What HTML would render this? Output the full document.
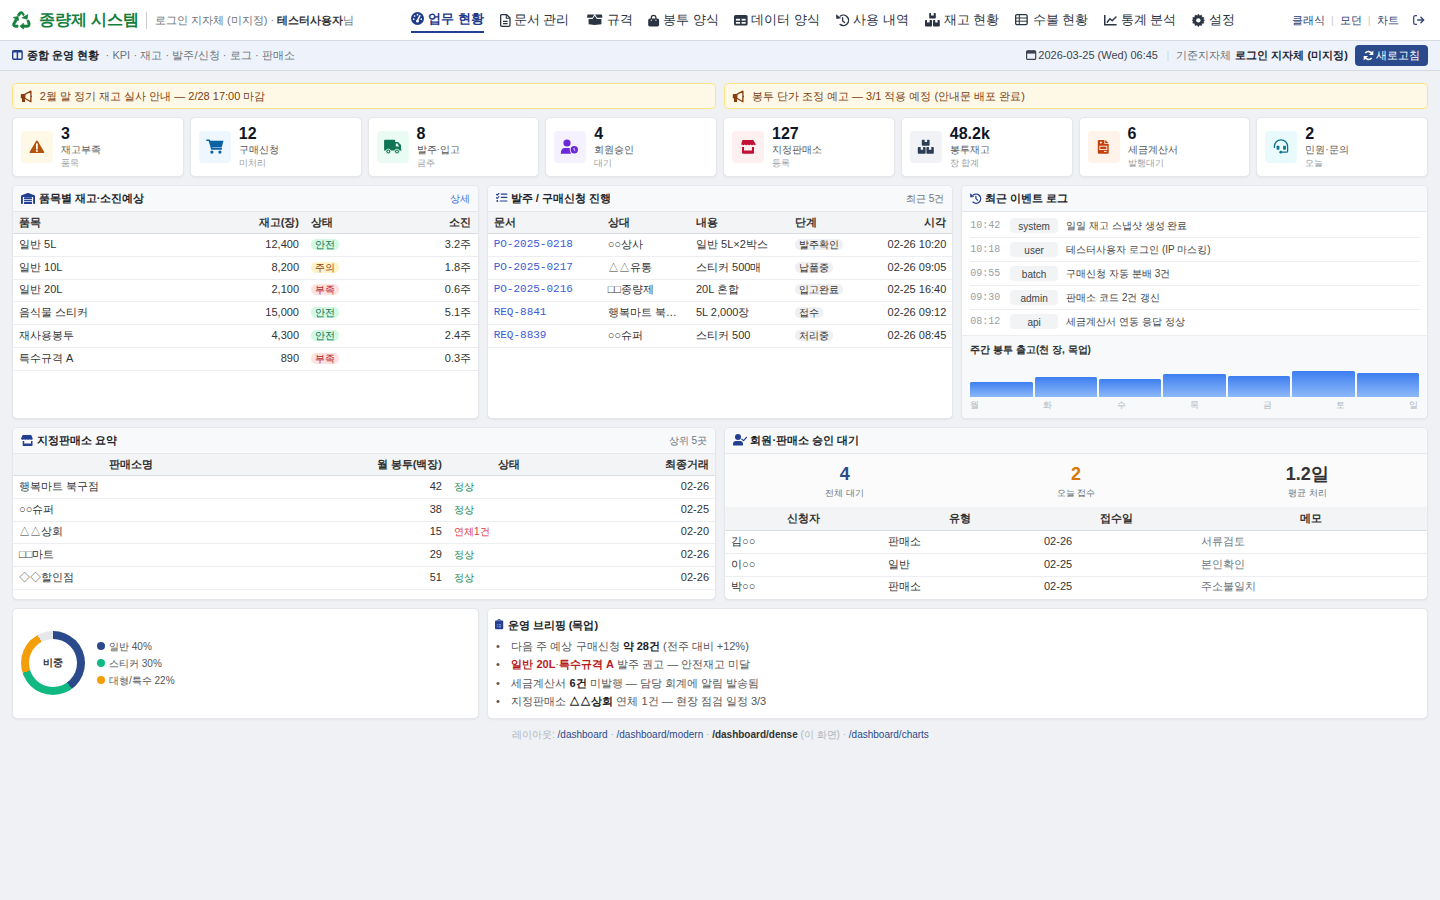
<!DOCTYPE html>
<html lang="ko"><head><meta charset="utf-8"><title>종량제 시스템</title>
<style>
*{box-sizing:border-box;margin:0;padding:0}
html,body{width:1440px;height:900px;overflow:hidden}
body{font-family:"Liberation Sans",sans-serif;background:#eff1f5;color:#212529;font-size:11px;position:relative}
.abs{position:absolute}
svg{display:inline-block;vertical-align:middle}
/* top nav */
.top{position:absolute;left:0;top:0;width:1440px;height:41px;background:#fff;border-bottom:1px solid #d5d9e0}
.brand{position:absolute;left:12px;top:9px;width:130px;height:22px;font-size:16px;font-weight:bold;color:#15803d;white-space:nowrap;line-height:22px}
.brand svg{vertical-align:-3px;margin-right:5px}
.who{position:absolute;left:146px;top:12px;height:17px;border-left:1px solid #ccc;padding-left:8px;font-size:11px;color:#6c757d;line-height:17px;white-space:nowrap}
.who b{color:#333}
.nav{position:absolute;top:0;height:40px;font-size:13px;color:#2b3442;white-space:nowrap;line-height:40px}
.nav.act{color:#1e3a8a;font-weight:bold}

.nav svg{vertical-align:-2px;margin-right:4px}
.tlinks{position:absolute;left:1292px;top:12px;font-size:11px;color:#2c3e70;white-space:nowrap;line-height:16px}
.tlinks .sep{color:#ccc;margin:0 6px}
/* sub header */
.sub{position:absolute;left:0;top:41px;width:1440px;height:30px;background:#eef3fb;border-bottom:1px solid #d5d9e0}
.sub .l{position:absolute;left:12px;top:7px;font-size:11px;line-height:15px;white-space:nowrap}
.sub .l b{color:#212529}
.sub .l span{color:#6c757d}
.sub .r{position:absolute;right:85px;top:7px;font-size:11px;line-height:15px;white-space:nowrap;color:#444}
.btn{position:absolute;left:1355px;top:45px;width:73px;height:21px;background:#2a4a8c;border-radius:4px;color:#fff;font-size:11px;line-height:21px}
/* alerts */
.alert{position:absolute;top:83px;height:26px;background:#fef9e7;border:1px solid #fde28a;border-radius:4px;color:#7c3f12;font-size:11px;line-height:24px;padding-left:7px;white-space:nowrap}

/* kpi */
.kpi{position:absolute;top:117px;width:171.75px;height:60px;background:#fff;border-radius:5px;border:1px solid #e4e7eb;box-shadow:0 1px 2px rgba(0,0,0,.05)}
.kpi .ic{position:absolute;left:8px;top:13px;width:32px;height:32px;border-radius:4px}
.kpi .ic svg{position:absolute;left:0;top:0}
.kpi .v{position:absolute;left:48px;top:7px;font-size:16px;font-weight:bold;color:#0f1626;line-height:18px}
.kpi .t1{position:absolute;left:48px;top:25px;font-size:10px;color:#555;line-height:13px}
.kpi .t2{position:absolute;left:48px;top:39px;font-size:9px;color:#9aa0a6;line-height:12px}
/* panels */
.pnl{position:absolute;background:#fff;border-radius:5px;border:1px solid #e4e7eb;box-shadow:0 1px 2px rgba(0,0,0,.05);overflow:hidden}
.ph{height:26px;background:#f8f9fb;border-bottom:1px solid #e4e7eb;position:relative;font-size:11px;font-weight:bold;line-height:25px;padding-left:8px;color:#212529;white-space:nowrap}
.ph .rt{position:absolute;right:8px;top:0;font-weight:normal;font-size:10px;color:#6c757d}
.ph svg{vertical-align:-2px;margin-right:4px}
table{border-collapse:separate;border-spacing:0;width:100%;font-size:11px;table-layout:fixed}
th{background:#f3f4f6;font-weight:bold;color:#333;line-height:15px;padding:3px 6px 3px;text-align:left;border-bottom:1px solid #d9dce1;white-space:nowrap}
td{line-height:15px;padding:2.7px 6px 4.13px;border-bottom:1px solid #eceef1;color:#333;white-space:nowrap;overflow:hidden}
.num{text-align:right}
.bdg{display:inline-block;font-size:10px;line-height:11px;padding:0 4px;border-radius:5px;vertical-align:0px}
.g{background:#d1fae5;color:#0f6b4f}
.y{background:#fef3c7;color:#92400e}
.rd{background:#fee2e2;color:#b91c1c}
.gr{background:#eef0f3;color:#333}
.mono{font-family:"Liberation Mono",monospace;color:#3b5bdb}

.log{position:relative;height:24px;margin:0 7px 0 8px;border-bottom:1px solid #eceef1;white-space:nowrap}
.log .tm{position:absolute;left:0;top:6px;font-family:"Liberation Mono",monospace;font-size:10px;color:#9aa0a6;line-height:12px}
.log .tg{position:absolute;left:40px;top:4.3px;width:47.5px;height:14.5px;background:#f1f3f5;border-radius:4px;text-align:center;font-size:10px;line-height:17px;color:#444}
.log .tx{position:absolute;left:96px;top:5px;font-size:10px;line-height:14px;color:#444}
.chart{position:absolute;left:0;top:149px;width:100%;bottom:0;background:#f8f9fb;border-top:1px solid #eceef1}
.bars{position:absolute;left:8px;right:8px;top:35px;height:26px;display:flex;align-items:flex-end;gap:2px}
.bars div{flex:1;background:linear-gradient(#3d7ef0,#8db9f8);border-radius:1.5px 1.5px 0 0}
.lbl{position:absolute;left:8px;right:9px;top:213px;display:flex;justify-content:space-between;font-size:9px;color:#adb5bd;line-height:10px}
.stat{position:absolute;top:0;width:231.33px;text-align:center}
.stat .n{font-size:18px;font-weight:bold;line-height:22px}
.stat .l{font-size:9.3px;color:#6c757d;line-height:12px;margin-top:2px}
.bul{display:inline-block;width:17.3px;color:#555;padding-left:2px}
.t1 td:last-child,.t1 th:last-child{padding-right:6.6px}
</style></head><body>

<!-- TOP NAV -->
<div class="top">
  <div class="brand"><svg class="abs" style="left:-0.5px;top:1.7px" width="19" height="19" viewBox="0 0 19 19"><g fill="#15803d" stroke="#15803d" stroke-width="0.7" stroke-linejoin="round"><path d="M5.3 4.2 Q7 0.3 9.6 0.6 Q11 0.8 12.4 3.6 L11.4 4.9 L10.2 3.2 Q9.6 2.4 8.7 3.1 L7.2 5.3z"/><path d="M10 6.8 L15.8 3.6 L15 8.2z"/><path d="M1.2 6.5 L6 5.5 L6.6 9.4z"/><path d="M3.3 8 L5.4 9.2 L3 13 Q2.6 14 3.6 14.1 L6 14.1 L6 16.3 L3.2 16.3 Q0.2 16.1 0.6 12.8z"/><path d="M14.9 9.5 Q16.5 8.6 17 9.3 Q19.1 12.8 17.6 15.3 Q16.8 16.3 15.6 16.3 L11.5 16.3 L11.5 14.1 L15.4 14.1 Q16.2 14 16 13.2z"/><path d="M7.9 15.2 L11.6 12.2 L11.6 18.1z"/></g></svg><span style="position:absolute;left:26.5px;top:0">종량제 시스템</span></div>
  <div class="who">로그인 지자체 (미지정) · <b>테스터사용자</b>님</div>
</div>

<!-- SUB HEADER -->
<div class="sub">
  <svg class="abs" style="left:12.1px;top:9px" width="11" height="10" viewBox="0 0 11 10"><rect x="0.7" y="0.7" width="9.4" height="8.6" rx="1.2" stroke="#233f91" stroke-width="1.4" fill="none"/><rect x="0.7" y="0.7" width="9.4" height="1.8" fill="#233f91"/><path d="M5.4 1 V9" stroke="#233f91" stroke-width="1.5"/></svg>
  <div class="abs" style="left:27.3px;top:7px;font-size:11px;line-height:15px;white-space:nowrap;font-weight:bold;color:#212529">종합 운영 현황</div>
  <div class="abs" style="left:105.5px;top:7px;font-size:11px;line-height:15px;white-space:nowrap;color:#6c757d;word-spacing:0.2px">· KPI · 재고 · 발주/신청 · 로그 · 판매소</div>
</div>
<div class="btn"><svg width="11" height="11" viewBox="0 0 11 11" style="position:absolute;left:8px;top:5px"><path d="M9.2 4.3 A4 4 0 0 0 2.3 3" stroke="#fff" stroke-width="1.6" fill="none"/><path d="M10.3 0.6 V5 H5.9z" fill="#fff"/><path d="M1.8 6.7 A4 4 0 0 0 8.7 8" stroke="#fff" stroke-width="1.6" fill="none"/><path d="M0.7 10.4 V6 H5.1z" fill="#fff"/></svg><span style="position:absolute;left:21px;top:0">새로고침</span></div>


<!-- NAV ITEMS -->
<svg class="abs" style="left:411px;top:12.3px" width="13" height="13" viewBox="0 0 13 13"><circle cx="6.5" cy="6.5" r="6.5" fill="#1e3a8a"/><path d="M6.5 8.4 L8.9 3.6" stroke="#fff" stroke-width="1.4" stroke-linecap="round"/><circle cx="6.5" cy="8.9" r="1.5" fill="#fff"/><circle cx="2.7" cy="7.2" r="0.85" fill="#fff"/><circle cx="3.6" cy="4" r="0.85" fill="#fff"/><circle cx="6.5" cy="2.7" r="0.85" fill="#fff"/><circle cx="10.3" cy="7.2" r="0.85" fill="#fff"/></svg>
<div class="nav act" style="left:428.3px;top:-0.7px">업무 현황</div><div class="abs" style="left:411px;top:31px;width:73px;height:2px;background:#233f91"></div>
<svg class="abs" style="left:499.7px;top:14.1px" width="11" height="13" viewBox="0 0 11 13"><path d="M1.7 0.65 H6.6 L10 4 V11.1 Q10 12.3 8.8 12.3 H1.9 Q0.65 12.3 0.65 11.1 V1.9 Q0.65 0.65 1.7 0.65z" stroke="#2b3442" stroke-width="1.3" fill="none" stroke-linejoin="round"/><path d="M6.3 0.9 V4.3 H9.8" stroke="#2b3442" stroke-width="1.1" fill="none"/><path d="M3 7.4 H7.6 M3 9.6 H7.6" stroke="#2b3442" stroke-width="1.1"/></svg>
<div class="nav" style="left:513.7px">문서 관리</div>
<svg class="abs" style="left:586.6px;top:14.4px" width="16" height="11" viewBox="0 0 16 11"><path d="M0.5 0.4 H7.3 L5.4 3.8 H0z" fill="#2b3442"/><path d="M8.1 0.4 H14.9 L15.4 3.8 H10z" fill="#2b3442"/><path d="M1.6 5 H5.6 L7.7 1.8 L9.8 5 H14.4 V10.2 L7.7 11 L1.6 10.2z" fill="#2b3442"/></svg>
<div class="nav" style="left:607.2px">규격</div>
<svg class="abs" style="left:647.9px;top:14.1px" width="12" height="13" viewBox="0 0 12 13"><path d="M3.3 5 V3.6 A2.3 2.3 0 0 1 7.9 3.6 V5" stroke="#2b3442" stroke-width="1.3" fill="none"/><rect x="0.2" y="4.4" width="10.9" height="8" rx="1.6" fill="#2b3442"/><circle cx="3.3" cy="6.2" r="0.6" fill="#fff"/><circle cx="7.9" cy="6.2" r="0.6" fill="#fff"/></svg>
<div class="nav" style="left:663.3px">봉투 양식</div>
<svg class="abs" style="left:733.9px;top:14.9px" width="14" height="11" viewBox="0 0 14 11"><rect x="0" y="0" width="13.6" height="10.6" rx="1.6" fill="#2b3442"/><rect x="1.9" y="3.8" width="4.2" height="1.8" fill="#fff"/><rect x="7.6" y="3.8" width="4.1" height="1.8" fill="#fff"/><rect x="1.9" y="7" width="4.2" height="1.7" fill="#fff"/><rect x="7.6" y="7" width="4.1" height="1.7" fill="#fff"/></svg>
<div class="nav" style="left:750.9px">데이터 양식</div>
<svg class="abs" style="left:835.8px;top:13.6px" width="14" height="13" viewBox="0 0 14 13"><path d="M4.4 2 A5.2 5.2 0 1 1 4.1 10.4" stroke="#2b3442" stroke-width="1.4" fill="none" stroke-linecap="round"/><path d="M0.4 0.8 L4.6 4 L0.6 4.6z" fill="#2b3442" stroke="#2b3442" stroke-width="0.6" stroke-linejoin="round"/><path d="M6.6 3.6 V7 L8.6 8.6" stroke="#2b3442" stroke-width="1.3" fill="none" stroke-linecap="round"/></svg>
<div class="nav" style="left:852.9px">사용 내역</div>
<svg class="abs" style="left:925px;top:13.2px" width="15" height="14" viewBox="0 0 15 14"><g fill="#2b3442"><path d="M4.2 0.8 Q4.2 0 5 0 H6 V2.6 H8.8 V0 H10 Q10.8 0 10.8 0.8 V4.8 Q10.8 5.6 10 5.6 H5 Q4.2 5.6 4.2 4.8z"/><path d="M0 7.8 Q0 7 0.8 7 H2 V9.6 H4.6 V7 H6.2 Q7 7 7 7.8 V12.8 Q7 13.6 6.2 13.6 H0.8 Q0 13.6 0 12.8z"/><path d="M8 7.8 Q8 7 8.8 7 H10.2 V9.6 H12.6 V7 H14 Q14.8 7 14.8 7.8 V12.8 Q14.8 13.6 14 13.6 H8.8 Q8 13.6 8 12.8z"/></g></svg>
<div class="nav" style="left:943.8px">재고 현황</div>
<svg class="abs" style="left:1015.2px;top:14.4px" width="13" height="12" viewBox="0 0 13 12"><rect x="0.65" y="0.65" width="11.5" height="9.9" rx="1.3" stroke="#2b3442" stroke-width="1.3" fill="none"/><path d="M0.6 4 H12.2 M0.6 7.2 H12.2 M4.3 0.6 V10.6" stroke="#2b3442" stroke-width="1"/></svg>
<div class="nav" style="left:1032.7px">수불 현황</div>
<svg class="abs" style="left:1103.9px;top:14.9px" width="13" height="11" viewBox="0 0 13 11"><path d="M0.75 0 V9.85 H12.6" stroke="#2b3442" stroke-width="1.5" fill="none"/><path d="M3.2 7.2 L6 3.8 L8.2 5.8 L12 2" stroke="#2b3442" stroke-width="1.4" fill="none" stroke-linejoin="round" stroke-linecap="round"/></svg>
<div class="nav" style="left:1120.8px">통계 분석</div>
<svg class="abs" style="left:1192.3px;top:13.9px" width="13" height="13" viewBox="0 0 13 13"><path d="M6.35 0 L7.6 1.7 L9.6 1.1 L9.9 3.2 L12 3.6 L11.4 5.6 L12.7 6.3 L11.4 7.1 L12 9.1 L9.9 9.5 L9.6 11.6 L7.6 11 L6.35 12.7 L5.1 11 L3.1 11.6 L2.8 9.5 L0.7 9.1 L1.3 7.1 L0 6.3 L1.3 5.6 L0.7 3.6 L2.8 3.2 L3.1 1.1 L5.1 1.7z" fill="#2b3442" stroke="#2b3442" stroke-width="0.5" stroke-linejoin="round"/><circle cx="6.35" cy="6.35" r="2.2" fill="#fff"/></svg>
<div class="nav" style="left:1209px">설정</div>
<div class="tlinks">클래식<span class="sep">|</span>모던<span class="sep">|</span>차트</div>
<svg class="abs" style="left:1412.6px;top:15px" width="12" height="10" viewBox="0 0 12 10"><path d="M4 0.7 H2.3 Q0.7 0.7 0.7 2.3 V7.7 Q0.7 9.3 2.3 9.3 H4" stroke="#3b4a75" stroke-width="1.3" fill="none"/><path d="M4.6 5 H10.6 M7.9 2.3 L10.7 5 L7.9 7.7" stroke="#3b4a75" stroke-width="1.5" fill="none" stroke-linejoin="round" stroke-linecap="round"/></svg>
<svg class="abs" style="left:1025.8px;top:49.9px" width="11" height="10" viewBox="0 0 11 10"><rect x="0.6" y="0.9" width="9.1" height="8.5" rx="1" stroke="#3d4450" stroke-width="1.2" fill="none"/><rect x="0.6" y="0.9" width="9.1" height="2.7" fill="#3d4450"/><path d="M2.8 0 V1.2 M7.5 0 V1.2" stroke="#3d4450" stroke-width="1.2"/></svg>
<div class="abs" style="left:1038.3px;top:48px;font-size:11px;line-height:15px;white-space:nowrap;color:#3d4450">2026-03-25 (Wed) 06:45</div>
<div class="abs" style="left:1166.5px;top:48px;font-size:11px;line-height:15px;color:#cfd4db">|</div>
<div class="abs" style="left:1176.4px;top:48px;font-size:11px;line-height:15px;white-space:nowrap;color:#6c757d">기준지자체</div>
<div class="abs" style="left:1235.4px;top:48px;font-size:11px;line-height:15px;white-space:nowrap;color:#1f2630;font-weight:bold">로그인 지자체 (미지정)</div>

<!-- ALERTS -->
<div class="alert" style="left:12px;width:704px"><svg width="13" height="13" viewBox="0 0 13 13" style="vertical-align:-3px;margin-right:6.8px"><rect x="0.8" y="4" width="4.2" height="4.6" rx="0.8" fill="#8a3d0f"/><rect x="2" y="8" width="3" height="4" fill="#8a3d0f"/><path d="M4.8 4.4 L10.9 1.2 L10.9 11.8 L4.8 8.2z" stroke="#8a3d0f" stroke-width="1.3" fill="none" stroke-linejoin="round"/><path d="M11 5.4 L12.2 6.5 L11 7.6z" fill="#8a3d0f"/></svg>2월 말 정기 재고 실사 안내 — 2/28 17:00 마감</div>
<div class="alert" style="left:724px;width:704px"><svg width="13" height="13" viewBox="0 0 13 13" style="vertical-align:-3px;margin-right:6.8px"><rect x="0.8" y="4" width="4.2" height="4.6" rx="0.8" fill="#8a3d0f"/><rect x="2" y="8" width="3" height="4" fill="#8a3d0f"/><path d="M4.8 4.4 L10.9 1.2 L10.9 11.8 L4.8 8.2z" stroke="#8a3d0f" stroke-width="1.3" fill="none" stroke-linejoin="round"/><path d="M11 5.4 L12.2 6.5 L11 7.6z" fill="#8a3d0f"/></svg>봉투 단가 조정 예고 — 3/1 적용 예정 (안내문 배포 완료)</div>


<!-- KPI -->
<div class="kpi" style="left:12.0px"><div class="ic" style="background:#fef8e6"><svg width="32" height="32" viewBox="0 0 32 32"><path d="M15.9 9.6 Q16.5 9.6 16.9 10.3 L23.2 21 Q23.6 22.1 22.4 22.1 H9.4 Q8.2 22.1 8.6 21 L14.9 10.3 Q15.3 9.6 15.9 9.6z" fill="#b4530a"/><path d="M15.9 13.2 V17.8" stroke="#fff" stroke-width="1.7" stroke-linecap="round"/><circle cx="15.9" cy="19.9" r="1" fill="#fff"/></svg></div><div class="v">3</div><div class="t1">재고부족</div><div class="t2">품목</div></div>
<div class="kpi" style="left:189.75px"><div class="ic" style="background:#eef6fe"><svg width="32" height="32" viewBox="0 0 32 32"><path d="M10.9 9.7 H24.2 Q24.5 9.8 24.3 10.5 L22.8 16.2 Q22.7 16.5 22.3 16.5 H12.7z" fill="#0b62a4"/><path d="M7.9 9.3 H10.3 L12.9 17.9 H22.3" stroke="#0b62a4" stroke-width="1.6" fill="none" stroke-linecap="round" stroke-linejoin="round"/><circle cx="12.9" cy="21.1" r="1.6" fill="#0b62a4"/><circle cx="20.9" cy="21.1" r="1.6" fill="#0b62a4"/></svg></div><div class="v">12</div><div class="t1">구매신청</div><div class="t2">미처리</div></div>
<div class="kpi" style="left:367.5px"><div class="ic" style="background:#eafbf3"><svg width="32" height="32" viewBox="0 0 32 32"><path d="M7.1 9.6 Q7.1 8.7 8 8.7 H17.4 Q18.2 8.7 18.2 9.6 V11.1 H21 L24 14 V18.6 L24.7 19.1 V19.4 H7.1z" fill="#0f7554"/><path d="M18.8 12.6 H20.5 L22.2 15.6 H18.8z" fill="#eafbf3"/><circle cx="11.3" cy="20.5" r="2.4" fill="#0f7554" stroke="#eafbf3" stroke-width="0.8"/><circle cx="11.3" cy="20.5" r="0.9" fill="#eafbf3"/><circle cx="20" cy="20.5" r="2.4" fill="#0f7554" stroke="#eafbf3" stroke-width="0.8"/><circle cx="20" cy="20.5" r="0.9" fill="#eafbf3"/></svg></div><div class="v">8</div><div class="t1">발주·입고</div><div class="t2">금주</div></div>
<div class="kpi" style="left:545.25px"><div class="ic" style="background:#f5f1fe"><svg width="32" height="32" viewBox="0 0 32 32"><circle cx="13" cy="12" r="3.6" fill="#6d28d9"/><path d="M6.8 22.7 Q6.8 17.1 11 17.1 H15 Q16 17.1 16.8 17.6 V22.7z" fill="#6d28d9"/><circle cx="20.3" cy="18.8" r="4.6" fill="#f5f1fe"/><circle cx="20.3" cy="18.8" r="3.7" fill="#6d28d9"/><path d="M20.1 17 V18.9 L21.3 19.9" stroke="#f5f1fe" stroke-width="0.9" fill="none"/></svg></div><div class="v">4</div><div class="t1">회원승인</div><div class="t2">대기</div></div>
<div class="kpi" style="left:723.0px"><div class="ic" style="background:#fef0f1"><svg width="32" height="32" viewBox="0 0 32 32"><path d="M11 8.9 H20.8 Q21.3 8.9 21.6 9.4 L23.6 13 Q23.8 14.2 22.9 14.2 Q22.1 14.2 21.5 13.6 Q20.8 14.2 20 14.2 Q19.2 14.2 18.6 13.6 Q17.9 14.2 17.1 14.2 Q16.3 14.2 15.6 13.6 Q15 14.2 14.2 14.2 Q13.4 14.2 12.7 13.6 Q12.1 14.2 11.3 14.2 Q10.5 14.2 9.9 13.6 Q9.1 14.2 9.3 13 L10.2 9.4 Q10.5 8.9 11 8.9z" fill="#c11236"/><path d="M10 16 H12 V19.6 H20 V16 H22 V21.7 Q22 22.7 21 22.7 H11 Q10 22.7 10 21.7z" fill="#c11236"/></svg></div><div class="v">127</div><div class="t1">지정판매소</div><div class="t2">등록</div></div>
<div class="kpi" style="left:900.75px"><div class="ic" style="background:#f1f3f6"><svg width="32" height="32" viewBox="0 0 32 32"><g fill="#2c3e55"><path d="M11.8 9.5 Q11.8 8.7 12.6 8.7 H14.7 V11.1 H17.1 V8.7 H18.8 Q19.6 8.7 19.6 9.5 V13.9 Q19.6 14.7 18.8 14.7 H12.6 Q11.8 14.7 11.8 13.9z"/><path d="M7.8 16.8 Q7.8 16 8.6 16 H10.7 V18.7 H13.1 V16 H14.8 Q15.6 16 15.6 16.8 V21.9 Q15.6 22.7 14.8 22.7 H8.6 Q7.8 22.7 7.8 21.9z"/><path d="M16.4 16.8 Q16.4 16 17.2 16 H18.9 V18.7 H21.3 V16 H23 Q23.8 16 23.8 16.8 V21.9 Q23.8 22.7 23 22.7 H17.2 Q16.4 22.7 16.4 21.9z"/></g></svg></div><div class="v">48.2k</div><div class="t1">봉투재고</div><div class="t2">장 합계</div></div>
<div class="kpi" style="left:1078.5px"><div class="ic" style="background:#fff3ea"><svg width="32" height="32" viewBox="0 0 32 32"><path d="M10.8 8.9 H16.4 V12.9 H20.7 V21.7 Q20.7 22.7 19.7 22.7 H10.8 Q9.8 22.7 9.8 21.7 V9.9 Q9.8 8.9 10.8 8.9z" fill="#c2410c"/><path d="M17.2 8.9 L20.7 12.3 H17.2z" fill="#c2410c"/><rect x="12" y="10.7" width="1.8" height="1.7" fill="#fff3ea"/><rect x="11.8" y="15.2" width="7" height="3.4" fill="#c2410c" stroke="#fff3ea" stroke-width="0.9"/><rect x="16" y="20" width="2.7" height="0.8" fill="#fff3ea"/></svg></div><div class="v">6</div><div class="t1">세금계산서</div><div class="t2">발행대기</div></div>
<div class="kpi" style="left:1256.25px"><div class="ic" style="background:#e9fafc"><svg width="32" height="32" viewBox="0 0 32 32"><path d="M9.4 17 V15.5 A6.6 6.6 0 0 1 22.6 15.5 V20.2 Q22.6 21.1 21.7 21.1 H16.5" stroke="#0e7490" stroke-width="1.3" fill="none"/><rect x="11.6" y="14.7" width="2.8" height="4" rx="0.7" fill="#0e7490"/><rect x="18.1" y="14.7" width="2.8" height="4" rx="0.7" fill="#0e7490"/><circle cx="15.8" cy="21.2" r="1.4" fill="#0e7490"/></svg></div><div class="v">2</div><div class="t1">민원·문의</div><div class="t2">오늘</div></div>


<!-- ROW 2 -->
<div class="pnl" style="left:12px;top:185px;width:466.67px;height:234px">
 <div class="ph"><svg width="14" height="11" viewBox="0 0 14 11" style="vertical-align:-1.5px;margin-left:-0.3px;margin-right:4px"><path d="M0 3.2 Q0 2.6 0.6 2.3 L6.6 0.1 Q7 0 7.4 0.1 L13.4 2.3 Q14 2.6 14 3.2 V10.3 Q14 11 13.3 11 H12.8 Q12.1 11 12.1 10.3 V3.9 H1.9 V10.3 Q1.9 11 1.2 11 H0.7 Q0 11 0 10.3z" fill="#233f91"/><rect x="3" y="4.3" width="8" height="2" rx="0.5" fill="#233f91"/><rect x="3" y="6.9" width="8" height="1.3" rx="0.4" fill="#233f91"/><rect x="3" y="8.9" width="8" height="2.1" rx="0.5" fill="#233f91"/></svg>품목별 재고·소진예상<span class="rt" style="color:#3b6fd4">상세</span></div>
 <table class="t1"><colgroup><col style="width:212px"><col style="width:80px"><col style="width:80px"><col></colgroup>
  <tr><th>품목</th><th class="num">재고(장)</th><th>상태</th><th class="num">소진</th></tr>
  <tr><td>일반 5L</td><td class="num">12,400</td><td><span class="bdg g">안전</span></td><td class="num">3.2주</td></tr>
  <tr><td>일반 10L</td><td class="num">8,200</td><td><span class="bdg y">주의</span></td><td class="num">1.8주</td></tr>
  <tr><td>일반 20L</td><td class="num">2,100</td><td><span class="bdg rd">부족</span></td><td class="num">0.6주</td></tr>
  <tr><td>음식물 스티커</td><td class="num">15,000</td><td><span class="bdg g">안전</span></td><td class="num">5.1주</td></tr>
  <tr><td>재사용봉투</td><td class="num">4,300</td><td><span class="bdg g">안전</span></td><td class="num">2.4주</td></tr>
  <tr><td>특수규격 A</td><td class="num">890</td><td><span class="bdg rd">부족</span></td><td class="num">0.3주</td></tr>
 </table>
</div>
<div class="pnl" style="left:486.67px;top:185px;width:466.67px;height:234px">
 <div class="ph"><svg width="12" height="10" viewBox="0 0 12 10" style="vertical-align:-1px;margin-right:3px"><path d="M0.4 1.3 L1.3 2.2 L2.9 0.3 M0.4 4.6 L1.3 5.5 L2.9 3.5" stroke="#233f91" stroke-width="1.1" fill="none" stroke-linecap="round" stroke-linejoin="round"/><circle cx="1.3" cy="8" r="0.95" fill="#233f91"/><path d="M5.2 1.1 H10.9 M5.2 4.3 H10.9 M4.2 8 H10.9" stroke="#233f91" stroke-width="1.2" stroke-linecap="round"/></svg>발주 / 구매신청 진행<span class="rt">최근 5건</span></div>
 <table><colgroup><col style="width:114px"><col style="width:88.3px"><col style="width:98.7px"><col style="width:80px"><col></colgroup>
  <tr><th>문서</th><th>상대</th><th>내용</th><th>단계</th><th class="num">시각</th></tr>
  <tr><td class="mono">PO-2025-0218</td><td>○○상사</td><td>일반 5L×2박스</td><td><span class="bdg gr">발주확인</span></td><td class="num">02-26 10:20</td></tr>
  <tr><td class="mono">PO-2025-0217</td><td>△△유통</td><td>스티커 500매</td><td><span class="bdg gr">납품중</span></td><td class="num">02-26 09:05</td></tr>
  <tr><td class="mono">PO-2025-0216</td><td>□□종량제</td><td>20L 혼합</td><td><span class="bdg gr">입고완료</span></td><td class="num">02-25 16:40</td></tr>
  <tr><td class="mono">REQ-8841</td><td><span style="display:inline-block;max-width:70px;overflow:hidden;text-overflow:ellipsis;vertical-align:top">행복마트 북구점</span></td><td>5L 2,000장</td><td><span class="bdg gr">접수</span></td><td class="num">02-26 09:12</td></tr>
  <tr><td class="mono">REQ-8839</td><td>○○슈퍼</td><td>스티커 500</td><td><span class="bdg gr">처리중</span></td><td class="num">02-26 08:45</td></tr>
 </table>
</div>
<div class="pnl" style="left:961.33px;top:185px;width:466.67px;height:234px">
 <div class="ph"><svg width="12" height="11" viewBox="0 0 12 11" style="vertical-align:-1.5px;margin-right:2.5px"><path d="M3.4 1.9 A4.6 4.6 0 1 1 3 9.1" stroke="#233f91" stroke-width="1.3" fill="none" stroke-linecap="round"/><path d="M0.3 0.7 L3.9 3.6 L0.4 4.1z" fill="#233f91" stroke="#233f91" stroke-width="0.5" stroke-linejoin="round"/><path d="M5.9 3.2 V5.6 L7.6 7.2" stroke="#233f91" stroke-width="1.2" fill="none" stroke-linecap="round"/></svg>최근 이벤트 로그</div>
 <div style="height:2px"></div>
 <div class="log"><span class="tm">10:42</span><span class="tg">system</span><span class="tx">일일 재고 스냅샷 생성 완료</span></div>
 <div class="log"><span class="tm">10:18</span><span class="tg">user</span><span class="tx">테스터사용자 로그인 (IP 마스킹)</span></div>
 <div class="log"><span class="tm">09:55</span><span class="tg">batch</span><span class="tx">구매신청 자동 분배 3건</span></div>
 <div class="log"><span class="tm">09:30</span><span class="tg">admin</span><span class="tx">판매소 코드 2건 갱신</span></div>
 <div class="log" style="border-bottom:0"><span class="tm">08:12</span><span class="tg">api</span><span class="tx">세금계산서 연동 응답 정상</span></div>
 <div class="chart">
  <div style="position:absolute;left:8px;top:6.7px;font-size:10px;font-weight:bold;color:#333;line-height:14px">주간 봉투 출고(천 장, 목업)</div>
  <div class="bars"><div style="height:15px"></div><div style="height:20px"></div><div style="height:18px"></div><div style="height:23px"></div><div style="height:21px"></div><div style="height:26px"></div><div style="height:24px"></div></div>
  <div class="lbl" style="top:63.8px"><span>월</span><span>화</span><span>수</span><span>목</span><span>금</span><span>토</span><span>일</span></div>
 </div>
</div>

<!-- ROW 3 -->
<div class="pnl" style="left:12px;top:427px;width:704px;height:173px">
 <div class="ph"><svg width="12" height="11" viewBox="0 0 12 11" style="vertical-align:-1.5px;margin-left:0px;margin-right:3.7px"><path d="M1.6 0 H10.2 L11.7 3.4 Q11.9 4.8 10.6 4.8 Q9.7 4.8 8.8 4.2 Q8 4.8 7.3 4.8 Q6.5 4.8 5.9 4.2 Q5.2 4.8 4.5 4.8 Q3.8 4.8 3 4.2 Q2.2 4.8 1.3 4.8 Q0 4.8 0.1 3.4z" fill="#233f91"/><path d="M1.7 6 H3.2 V8.4 H10 V6 H11.5 V10.3 Q11.5 11 10.8 11 H2.4 Q1.7 11 1.7 10.3z" fill="#233f91"/></svg>지정판매소 요약<span class="rt">상위 5곳</span></div>
 <table><colgroup><col style="width:236px"><col style="width:199px"><col style="width:121px"><col></colgroup>
  <tr><th style="text-align:center">판매소명</th><th class="num">월 봉투(백장)</th><th style="text-align:center">상태</th><th class="num">최종거래</th></tr>
  <tr><td>행복마트 북구점</td><td class="num">42</td><td style="color:#198754;font-size:10px">정상</td><td class="num">02-26</td></tr>
  <tr><td>○○슈퍼</td><td class="num">38</td><td style="color:#198754;font-size:10px">정상</td><td class="num">02-25</td></tr>
  <tr><td>△△상회</td><td class="num">15</td><td style="color:#dc3545;font-size:10px">연체1건</td><td class="num">02-20</td></tr>
  <tr><td>□□마트</td><td class="num">29</td><td style="color:#198754;font-size:10px">정상</td><td class="num">02-26</td></tr>
  <tr><td>◇◇할인점</td><td class="num">51</td><td style="color:#198754;font-size:10px">정상</td><td class="num">02-26</td></tr>
 </table>
</div>
<div class="pnl" style="left:724px;top:427px;width:704px;height:173px">
 <div class="ph"><svg width="14" height="12" viewBox="0 0 14 12" style="vertical-align:-1.5px;margin-left:-0.3px;margin-right:3.7px"><circle cx="5" cy="3.1" r="3" fill="#233f91"/><path d="M0 11.4 V10 Q0 7 3 7 H7 Q10 7 10 10 V11.4z" fill="#233f91"/><path d="M8.9 5.2 L10.6 6.6 L13.5 3.3" stroke="#233f91" stroke-width="1.2" fill="none" stroke-linecap="round" stroke-linejoin="round"/></svg>회원·판매소 승인 대기</div>
 <div style="position:relative;height:53px;background:#fbfbfc">
  <div class="stat" style="left:4px;top:9px"><div class="n" style="color:#2a4a8c">4</div><div class="l">전체 대기</div></div>
  <div class="stat" style="left:235.33px;top:9px"><div class="n" style="color:#d97706">2</div><div class="l">오늘 접수</div></div>
  <div class="stat" style="left:466.67px;top:9px"><div class="n" style="color:#333">1.2일</div><div class="l">평균 처리</div></div>
 </div>
 <table><colgroup><col style="width:157px"><col style="width:156px"><col style="width:157px"><col></colgroup>
  <tr><th style="text-align:center;padding:4px 6px 4px">신청자</th><th style="text-align:center;padding:4px 6px 4px">유형</th><th style="text-align:center;padding:4px 6px 4px">접수일</th><th style="text-align:center;padding:4px 6px 4px">메모</th></tr>
  <tr><td>김○○</td><td>판매소</td><td>02-26</td><td style="color:#6c757d">서류검토</td></tr>
  <tr><td>이○○</td><td>일반</td><td>02-25</td><td style="color:#6c757d">본인확인</td></tr>
  <tr><td style="border-bottom:0">박○○</td><td style="border-bottom:0">판매소</td><td style="border-bottom:0">02-25</td><td style="color:#6c757d;border-bottom:0">주소불일치</td></tr>
 </table>
</div>

<!-- ROW 4 -->
<div class="pnl" style="left:12px;top:608px;width:466.67px;height:111px">
 <div style="position:absolute;left:8px;top:22px;width:64px;height:64px;border-radius:50%;background:conic-gradient(#2a4a8c 0 40%,#10b981 40% 70%,#f59e0b 70% 92%,#e5e7eb 92% 100%)"></div>
 <div style="position:absolute;left:16px;top:30px;width:48px;height:48px;border-radius:50%;background:#fff;text-align:center;line-height:48px;font-size:10px;font-weight:bold;color:#333">비중</div>
 <div style="position:absolute;left:84px;top:28.5px;font-size:10px;color:#555;line-height:17px;white-space:nowrap">
  <div><span style="display:inline-block;width:8px;height:8px;border-radius:50%;background:#2a4a8c;vertical-align:-0.5px;margin-right:4px"></span>일반 40%</div>
  <div><span style="display:inline-block;width:8px;height:8px;border-radius:50%;background:#10b981;vertical-align:-0.5px;margin-right:4px"></span>스티커 30%</div>
  <div><span style="display:inline-block;width:8px;height:8px;border-radius:50%;background:#f59e0b;vertical-align:-0.5px;margin-right:4px"></span>대형/특수 22%</div>
 </div>
</div>
<div class="pnl" style="left:486.67px;top:608px;width:941.33px;height:111px">
 <div style="position:absolute;left:7.5px;top:9px;font-size:11px;font-weight:bold;color:#222;line-height:15px;white-space:nowrap"><svg width="9" height="11" viewBox="0 0 9 11" style="vertical-align:-1px;margin-right:3.5px"><rect x="0" y="1.4" width="8.2" height="8.9" rx="1" fill="#233f91"/><path d="M2.4 1.8 Q2.4 0 4.1 0 Q5.8 0 5.8 1.8z" fill="#233f91"/><circle cx="4.1" cy="1.7" r="0.55" fill="#b8c4e6"/><circle cx="2.3" cy="5.8" r="0.5" fill="#b8c4e6"/><path d="M3.7 5.8 H6 M3.7 7.8 H6" stroke="#b8c4e6" stroke-width="0.8"/><circle cx="2.3" cy="7.8" r="0.5" fill="#b8c4e6"/></svg>운영 브리핑 (목업)</div>
 <ul style="position:absolute;left:6.4px;top:27.6px;list-style:none;font-size:11px;color:#555;line-height:18.5px;white-space:nowrap">
  <li><span class="bul">•</span>다음 주 예상 구매신청 <b style="color:#222">약 28건</b> (전주 대비 +12%)</li>
  <li><span class="bul">•</span><b style="color:#b91c1c">일반 20L</b>·<b style="color:#b91c1c">특수규격 A</b> 발주 권고 — 안전재고 미달</li>
  <li><span class="bul">•</span>세금계산서 <b style="color:#222">6건</b> 미발행 — 담당 회계에 알림 발송됨</li>
  <li><span class="bul">•</span>지정판매소 <b style="color:#222">△△상회</b> 연체 1건 — 현장 점검 일정 3/3</li>
 </ul>
</div>
<div class="abs" style="left:512px;top:728px;font-size:10px;line-height:14px;color:#adb5bd;white-space:nowrap">레이아웃: <span style="color:#2c4a8c">/dashboard</span> · <span style="color:#2c4a8c">/dashboard/modern</span> · <b style="color:#333">/dashboard/dense</b> (이 화면) · <span style="color:#2c4a8c">/dashboard/charts</span></div>

</body></html>
